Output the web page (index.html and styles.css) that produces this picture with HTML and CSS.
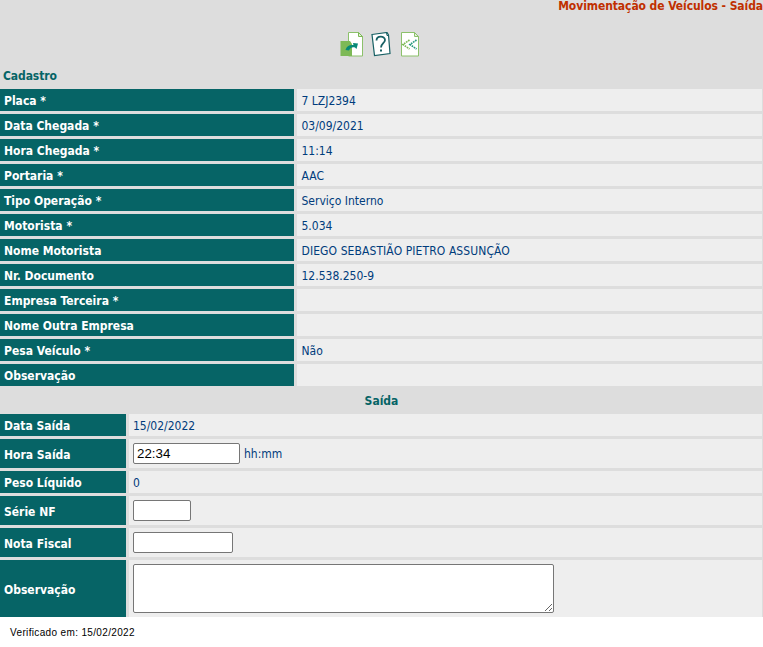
FILE: index.html
```html
<!DOCTYPE html>
<html lang="pt-BR">
<head>
<meta charset="utf-8">
<title>Movimentação de Veículos - Saída</title>
<link rel="stylesheet" href="styles.css">
</head>
<body>
<main class="page">
  <h1 class="title"><span>Movimentação de Veículos - Saída</span></h1>
  <nav class="toolbar">
    <svg class="icon-save" width="23" height="25" viewBox="0 0 23 25"><path d="M8.500 .5h10l4 4v19.500h-14z" fill="#fff" stroke="#8cc16b"/><path d="M18.500 .5v4h4z" fill="#e4f0dc" stroke="#7cb955"/><path d="M.5 9H10l2 3v12H.5z" fill="#7db956"/><path d="M5.500 18c1-4 4-5.500 8-5l-.5-2 5 .5-1.500 5.500-1.500-1.500c-3-.5-4.500 0-6 3z" fill="#078977"/></svg>
    <svg class="icon-help" width="20" height="25" viewBox="0 0 20 25"><path d="M1 2.500l15-2 1.500 2.500 1.500 18.500-15.500 2z" fill="#fff" stroke="#176064" stroke-width="1.200"/><path d="M15.500.5l.5 3h2" fill="none" stroke="#176064"/><path d="M5.500 8.500c0-5 8.500-5 8.500-.5 0 3-4 3.500-4 7.500" fill="none" stroke="#176064" stroke-width="1.800"/><path d="M9 17.500h2v2H9z" fill="#176064"/></svg>
    <svg class="icon-back" width="18" height="25" viewBox="0 0 18 25"><path d="M.5.5h13l4 4v19.500H.5z" fill="#fff" stroke="#8cc16b"/><path d="M13.500.5v4h4z" fill="#e4f0dc" stroke="#8cc16b"/><path d="M8.500 8L2 12.500 8.500 17" fill="none" stroke="#7db956" stroke-width="1.700" stroke-dasharray="1.700 .8"/><path d="M15.500 8L9 12.500l6.500 4.500" fill="none" stroke="#2a9a80" stroke-width="1.700" stroke-dasharray="1.700 .8"/></svg>
  </nav>
  <h2 class="section">Cadastro</h2>
  <dl class="grid entry">
    <dt><span>Placa *</span></dt><dd><span>7 LZJ2394</span></dd>
    <dt><span>Data Chegada *</span></dt><dd><span>03/09/2021</span></dd>
    <dt><span>Hora Chegada *</span></dt><dd><span>11:14</span></dd>
    <dt><span>Portaria *</span></dt><dd><span>AAC</span></dd>
    <dt><span>Tipo Operação *</span></dt><dd><span>Serviço Interno</span></dd>
    <dt><span>Motorista *</span></dt><dd><span>5.034</span></dd>
    <dt><span>Nome Motorista</span></dt><dd><span class="name">DIEGO SEBASTIÃO PIETRO ASSUNÇÃO</span></dd>
    <dt><span>Nr. Documento</span></dt><dd><span>12.538.250-9</span></dd>
    <dt><span>Empresa Terceira *</span></dt><dd></dd>
    <dt><span>Nome Outra Empresa</span></dt><dd></dd>
    <dt><span>Pesa Veículo *</span></dt><dd><span>Não</span></dd>
    <dt><span>Observação</span></dt><dd></dd>
  </dl>
  <h2 class="section centered">Saída</h2>
  <dl class="grid exit">
    <dt><span>Data Saída</span></dt><dd><span>15/02/2022</span></dd>
    <dt><span>Hora Saída</span></dt><dd><input class="time" value="22:34"><span>hh:mm</span></dd>
    <dt><span>Peso Líquido</span></dt><dd><span>0</span></dd>
    <dt><span>Série NF</span></dt><dd><input class="serie"></dd>
    <dt><span>Nota Fiscal</span></dt><dd><input class="nota"></dd>
    <dt><span>Observação</span></dt><dd><textarea></textarea></dd>
  </dl>
</main>
<footer>Verificado em: 15/02/2022</footer>
</body>
</html>
```
FILE: styles.css
```css
* { box-sizing: border-box; }
body {
  margin: 0;
  background: #fff;
  font: 12px/14px "DejaVu Sans Condensed", "DejaVu Sans", sans-serif;
  font-stretch: condensed;
  overflow: hidden;
}
.page { background: #ddd; height: 617px; }
.title {
  margin: 0;
  height: 32px;
  font-size: 12px;
  line-height: 12px;
  letter-spacing: -0.08px;
  text-align: right;
  color: #c03000;
}
.toolbar {
  display: flex;
  height: 36px;
  padding-left: 340px;
}
.icon-help { margin-left: 8px; }
.icon-back { margin-left: 10px; }
.section {
  margin: 0;
  height: 21px;
  padding: 1px 3px 0;
  font-size: 12px;
  line-height: 14px;
  letter-spacing: -0.1px;
  color: #066466;
}
.centered { height: 28px; padding-top: 8px; text-align: center; letter-spacing: 0; }
.grid {
  display: grid;
  gap: 3px;
  margin: 0;
  padding-right: 1px;
}
.entry { grid-template-columns: 294px 1fr; grid-auto-rows: 22px; }
.exit {
  grid-template-columns: 126px 1fr;
  grid-template-rows: 22px 29px 22px 29px 29px 57px;
}
dt, dd {
  display: flex;
  align-items: center;
  margin: 0;
  padding: 1px 4px 0;
}
dt { background: #066466; color: #fff; font-weight: bold; padding-top: 2px; }
dd { background: #eee; color: #003c7c; }
.entry dd { padding-left: 4.5px; padding-top: 2px; }
.name { letter-spacing: 0.09px; }
input, textarea {
  display: block;
  margin: 0 4px 0 0;
  padding: 1px 3px;
  border: 1px solid #767676;
  border-radius: 2px;
  background: #fff;
  color: #000;
  font: 13.333px "Liberation Sans", Arial, sans-serif;
}
input { height: 21px; margin-top: -1px; }
.time { width: 107px; }
.serie { width: 58px; }
.nota { width: 100px; }
textarea { width: 421px; height: 49px; margin-top: -1px; }
footer {
  padding: 9px 10px;
  font: 10px/14px "Liberation Sans", Arial, sans-serif;
  letter-spacing: 0.35px;
  color: #000;
}
```
